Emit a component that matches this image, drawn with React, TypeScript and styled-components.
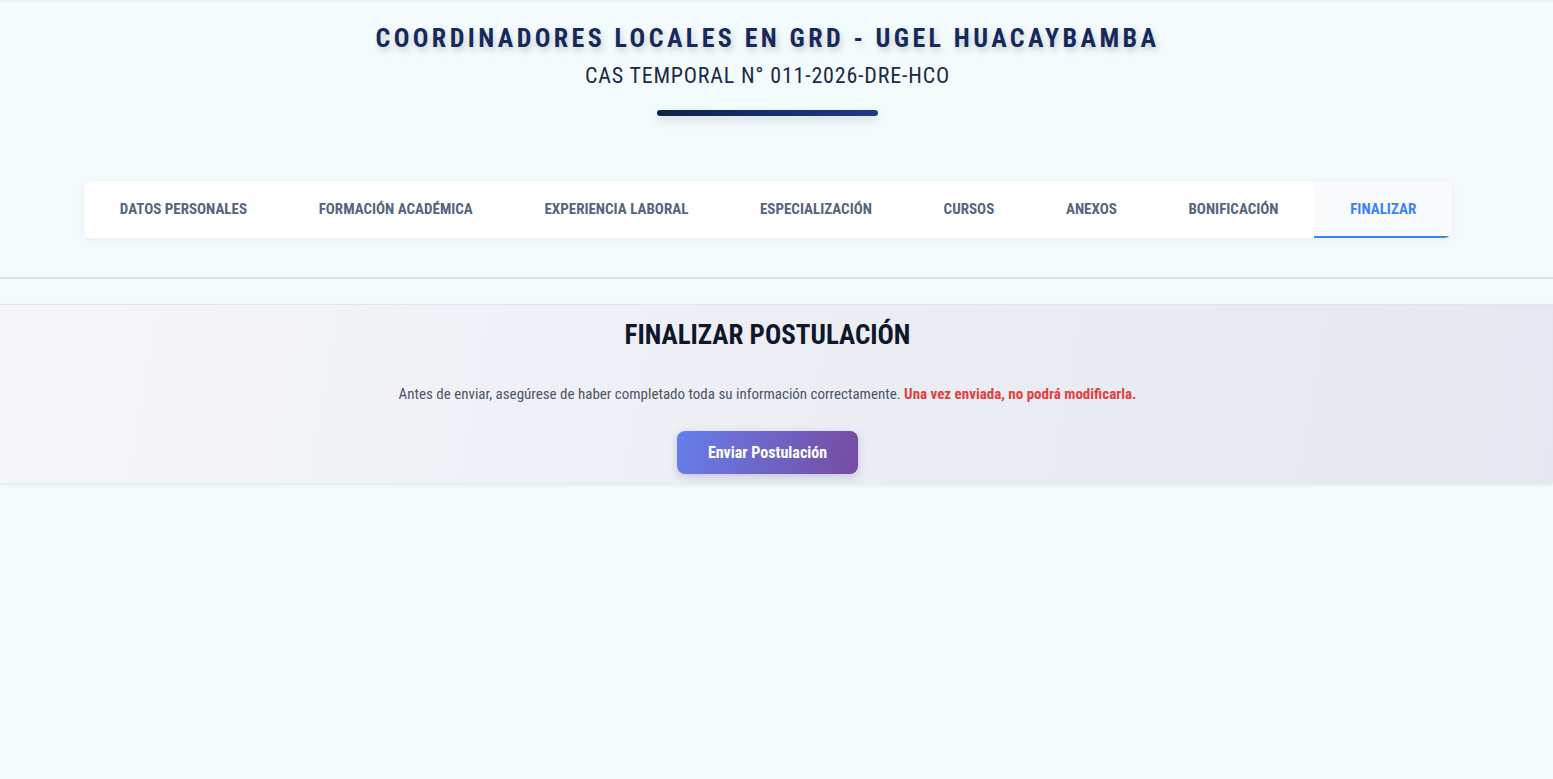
import styled, { createGlobalStyle } from 'styled-components';

const GlobalStyle = createGlobalStyle`
  body {
    margin: 0;
    background: #f3fbfd;
    font-family: 'Roboto', 'DejaVu Sans', sans-serif;
    font-stretch: 75%;
  }
  * {
    box-sizing: border-box;
  }
`;

const Page = styled.div`
  min-height: 100vh;
  background: #f3fbfd;
`;

const Header = styled.header`
  display: flex;
  flex-direction: column;
  align-items: center;
  padding: 22px 18px 0 0;
  background: linear-gradient(#e6f6f9 0px, #f3fbfd 4px);
`;

const Title = styled.h1`
  margin: 0;
  font-size: 26px;
  line-height: 32px;
  font-weight: 700;
  letter-spacing: 3.4px;
  color: #16295a;
  text-shadow: 2px 4px 6px rgba(0, 0, 0, 0.18);
`;

const Subtitle = styled.h2`
  margin: 7px 0 0;
  font-size: 22px;
  line-height: 30px;
  font-weight: 400;
  letter-spacing: 0.8px;
  color: #1b2a44;
`;

const Bar = styled.div`
  margin-top: 19px;
  width: 221px;
  height: 6px;
  border-radius: 4px;
  background: linear-gradient(90deg, #0f2246, #1e3a8a);
  box-shadow: 0 4px 10px rgba(0, 0, 0, 0.15);
`;

const NavWrap = styled.nav`
  margin-top: 65px;
  padding: 0 101px 0 84px;
`;

const TabCard = styled.div`
  display: flex;
  height: 57px;
  background: #ffffff;
  border-radius: 8px;
  overflow: hidden;
  box-shadow: 0 2px 10px rgba(15, 40, 80, 0.06);
`;

const Tab = styled.div<{ active?: boolean }>`
  flex: 1 1 auto;
  display: flex;
  align-items: center;
  justify-content: center;
  padding: 0 12px;
  font-size: 15px;
  font-weight: 700;
  white-space: nowrap;
  color: ${(p) => (p.active ? '#3b82f6' : '#56657f')};
  background: ${(p) => (p.active ? '#f8fafc' : 'transparent')};
  border-bottom: 2px solid ${(p) => (p.active ? '#3b82f6' : 'transparent')};
`;

const Divider = styled.hr`
  margin: 39px 0 0;
  border: 0;
  height: 2px;
  background: #e0e3e5;
`;

const Section = styled.section`
  margin-top: 25px;
  display: flex;
  flex-direction: column;
  align-items: center;
  padding: 14px 18px 9px 0;
  border-top: 1px solid #dde6ee;
  background: linear-gradient(100deg, #f7f7fa 0%, #eceef4 50%, #e5e8f0 100%);
  box-shadow: 0 2px 4px rgba(0, 0, 0, 0.08);
`;

const SectionTitle = styled.h3`
  margin: 0;
  font-size: 27px;
  line-height: 32px;
  font-weight: 700;
  letter-spacing: 0;
  color: #0f172a;
`;

const Notice = styled.p`
  margin: 32px 0 0;
  font-size: 15px;
  line-height: 22px;
  color: #4a5568;
`;

const Warning = styled.strong`
  color: #e53e3e;
`;

const SubmitButton = styled.button`
  margin-top: 26px;
  width: 181px;
  height: 43px;
  border: 0;
  border-radius: 8px;
  background: linear-gradient(100deg, #667eea, #764ba2);
  color: #ffffff;
  font-family: inherit;
  font-stretch: inherit;
  font-size: 16px;
  font-weight: 700;
  box-shadow: 0 3px 8px rgba(90, 80, 160, 0.25);
  cursor: pointer;
`;

const tabs = [
  'DATOS PERSONALES',
  'FORMACIÓN ACADÉMICA',
  'EXPERIENCIA LABORAL',
  'ESPECIALIZACIÓN',
  'CURSOS',
  'ANEXOS',
  'BONIFICACIÓN',
  'FINALIZAR',
];

function App() {
  return (
    <Page>
      <GlobalStyle />
      <Header>
        <Title>COORDINADORES LOCALES EN GRD - UGEL HUACAYBAMBA</Title>
        <Subtitle>CAS TEMPORAL N° 011-2026-DRE-HCO</Subtitle>
        <Bar />
      </Header>
      <NavWrap>
        <TabCard>
          {tabs.map((t) => (
            <Tab key={t} active={t === 'FINALIZAR'}>
              {t}
            </Tab>
          ))}
        </TabCard>
      </NavWrap>
      <Divider />
      <Section>
        <SectionTitle>FINALIZAR POSTULACIÓN</SectionTitle>
        <Notice>
          Antes de enviar, asegúrese de haber completado toda su información
          correctamente. <Warning>Una vez enviada, no podrá modificarla.</Warning>
        </Notice>
        <SubmitButton>Enviar Postulación</SubmitButton>
      </Section>
    </Page>
  );
}

export default App;
